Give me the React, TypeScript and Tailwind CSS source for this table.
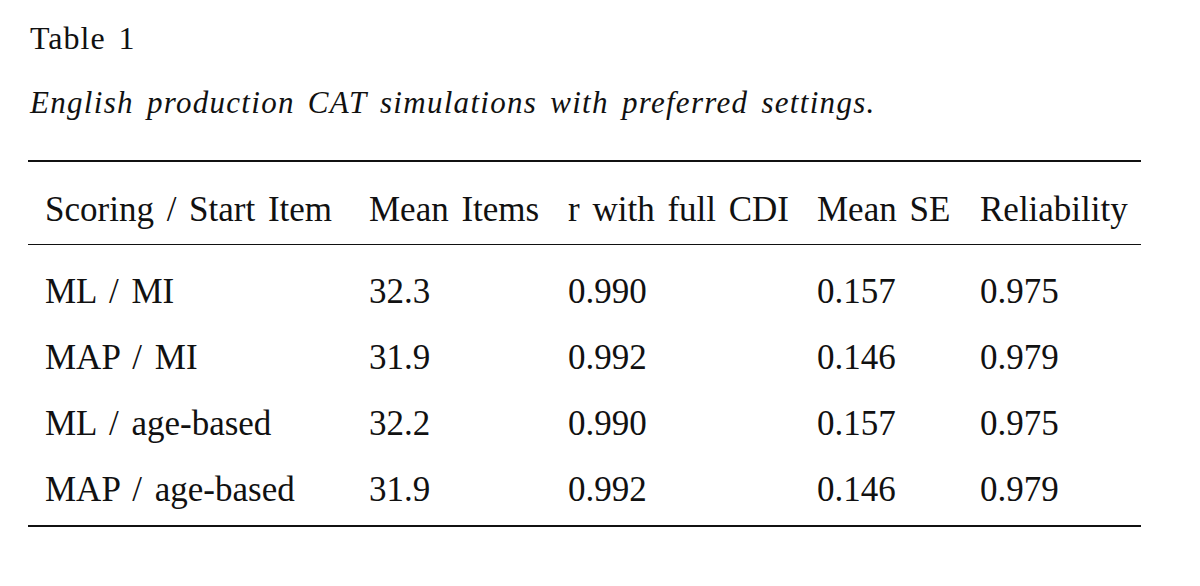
import React from 'react';

const rows = [
  ['ML / MI', '32.3', '0.990', '0.157', '0.975'],
  ['MAP / MI', '31.9', '0.992', '0.146', '0.979'],
  ['ML / age-based', '32.2', '0.990', '0.157', '0.975'],
  ['MAP / age-based', '31.9', '0.992', '0.146', '0.979'],
];

const headers = ['Scoring / Start Item', 'Mean Items', 'r with full CDI', 'Mean SE', 'Reliability'];

const cols = 'grid grid-cols-[324px_199px_249px_163px_1fr] pl-[17px]';

export default function App() {
  return (
    <main
      className="min-h-screen w-full bg-white text-[#111] pt-[18px] pl-[28px] [word-spacing:4px]"
      style={{ fontFamily: '"Liberation Serif", "Times New Roman", serif' }}
    >
      {/* Title + caption */}
      <div className="text-[32px] leading-[40px] pl-[2px] tracking-[1px]">Table 1</div>
      <div className="mt-[25px] text-[31px] leading-[40px] italic pl-[2px] tracking-[1.3px]">
        English production CAT simulations with preferred settings.
      </div>

      {/* Table */}
      <div className="mt-[37px] w-[1113px] border-t-2 border-b-2 border-[#111]">
        <div className={`${cols} pt-[28px] pb-[14px] text-[35px] leading-[40px] border-b border-[#111]`}>
          {headers.map((h) => (
            <div key={h} className="whitespace-nowrap">{h}</div>
          ))}
        </div>
        <div className="pt-[14px] pb-[2px]">
          {rows.map((r, i) => (
            <div key={i} className={`${cols} h-[66px] items-center text-[35px] leading-[40px]`}>
              {r.map((c, j) => (
                <div key={j} className="whitespace-nowrap">{c}</div>
              ))}
            </div>
          ))}
        </div>
      </div>
    </main>
  );
}
